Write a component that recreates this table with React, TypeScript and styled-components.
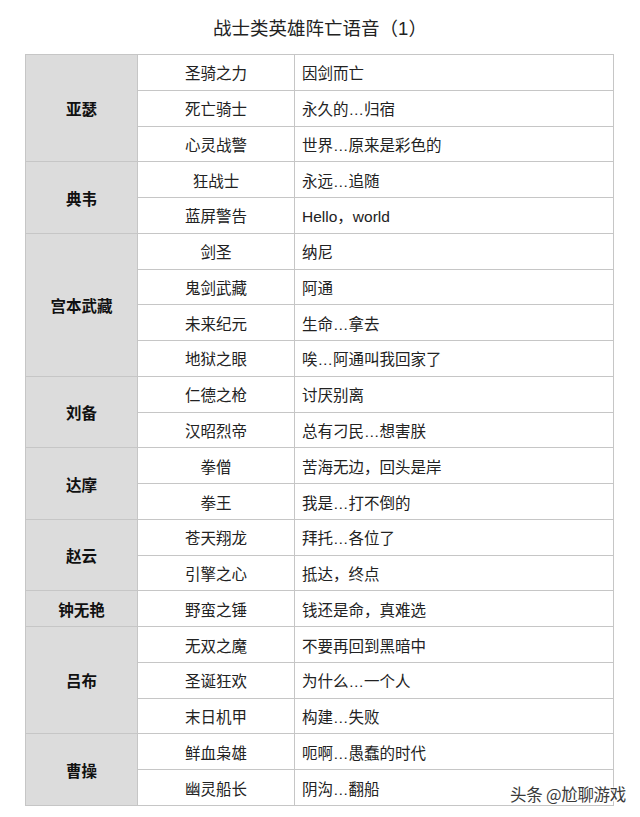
import styled, { createGlobalStyle } from "styled-components";

const GlobalStyle = createGlobalStyle`
  html, body {
    margin: 0;
    padding: 0;
    background: #ffffff;
  }
  body {
    font-family: "Liberation Sans", "Noto Sans CJK SC", sans-serif;
    color: #1a1a1a;
  }
`;

const Page = styled.div`
  position: relative;
  width: 640px;
  height: 817px;
  overflow: hidden;
`;

const Title = styled.h1`
  margin: 0;
  padding-top: 17px;
  height: 37px;
  box-sizing: border-box;
  text-align: center;
  font-size: 18.5px;
  line-height: 24px;
  font-weight: 400;
  color: #222;
`;

const Table = styled.div`
  margin-left: 25px;
  width: 589px;
  height: 752px;
  margin-top: 17px;
  display: grid;
  grid-template-columns: 112px 157px 1fr;
  grid-template-rows: repeat(21, 1fr);
  border-top: 1px solid #c6c6c6;
  border-left: 1px solid #c6c6c6;
  box-sizing: border-box;
`;

const Cell = styled.div`
  border-right: 1px solid #c6c6c6;
  border-bottom: 1px solid #c6c6c6;
  display: flex;
  align-items: center;
  font-size: 15.5px;
  min-height: 0;
`;

const HeroCell = styled(Cell)<{ $span: number }>`
  grid-row: span ${(p) => p.$span};
  grid-column: 1;
  justify-content: center;
  background: #dcdcdc;
  font-weight: 700;
  color: #111;
`;

const SkinCell = styled(Cell)`
  grid-column: 2;
  justify-content: center;
  color: #222;
`;

const LineCell = styled(Cell)`
  grid-column: 3;
  padding-left: 7px;
  color: #222;
`;

const Watermark = styled.div`
  position: absolute;
  right: 14px;
  bottom: 11px;
  font-size: 16.5px;
  color: #3a3a3a;
  font-family: "Noto Sans CJK SC", sans-serif;
  text-shadow: 0 0 2px #fff, 0 0 2px #fff, 1px 1px 0 #fff;
  letter-spacing: -0.3px;
`;

const data: { hero: string; rows: [string, string][] }[] = [
  {
    hero: "亚瑟",
    rows: [
      ["圣骑之力", "因剑而亡"],
      ["死亡骑士", "永久的…归宿"],
      ["心灵战警", "世界…原来是彩色的"],
    ],
  },
  {
    hero: "典韦",
    rows: [
      ["狂战士", "永远…追随"],
      ["蓝屏警告", "Hello，world"],
    ],
  },
  {
    hero: "宫本武藏",
    rows: [
      ["剑圣", "纳尼"],
      ["鬼剑武藏", "阿通"],
      ["未来纪元", "生命…拿去"],
      ["地狱之眼", "唉…阿通叫我回家了"],
    ],
  },
  {
    hero: "刘备",
    rows: [
      ["仁德之枪", "讨厌别离"],
      ["汉昭烈帝", "总有刁民…想害朕"],
    ],
  },
  {
    hero: "达摩",
    rows: [
      ["拳僧", "苦海无边，回头是岸"],
      ["拳王", "我是…打不倒的"],
    ],
  },
  {
    hero: "赵云",
    rows: [
      ["苍天翔龙", "拜托…各位了"],
      ["引擎之心", "抵达，终点"],
    ],
  },
  {
    hero: "钟无艳",
    rows: [["野蛮之锤", "钱还是命，真难选"]],
  },
  {
    hero: "吕布",
    rows: [
      ["无双之魔", "不要再回到黑暗中"],
      ["圣诞狂欢", "为什么…一个人"],
      ["末日机甲", "构建…失败"],
    ],
  },
  {
    hero: "曹操",
    rows: [
      ["鲜血枭雄", "呃啊…愚蠢的时代"],
      ["幽灵船长", "阴沟…翻船"],
    ],
  },
];

export default function App() {
  return (
    <Page>
      <GlobalStyle />
      <Title>战士类英雄阵亡语音（1）</Title>
      <Table>
        {data.map((group) => [
          <HeroCell key={group.hero} $span={group.rows.length}>
            {group.hero}
          </HeroCell>,
          ...group.rows.flatMap(([skin, line]) => [
            <SkinCell key={skin}>{skin}</SkinCell>,
            <LineCell key={skin + "-line"}>{line}</LineCell>,
          ]),
        ])}
      </Table>
      <Watermark>头条 @尬聊游戏</Watermark>
    </Page>
  );
}
